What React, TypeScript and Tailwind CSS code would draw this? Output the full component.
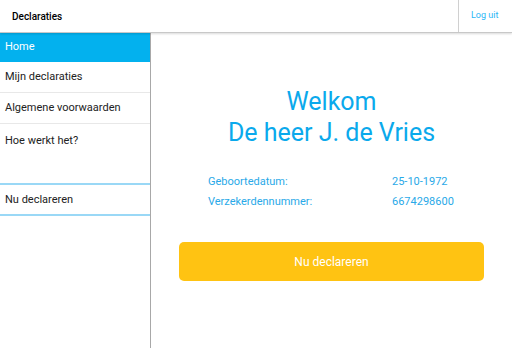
const menu = [
    {label: "Home", active: true},
    {label: "Mijn declaraties"},
    {label: "Algemene voorwaarden"},
];

export default function App() {
    return (
        <div className="w-[512px] h-[348px] bg-white flex flex-col overflow-hidden" style={{fontFamily: "Roboto, 'Noto Sans', sans-serif"}}>
            <header className="h-[33px] shrink-0 flex items-stretch border-b border-[#c8c8c8] shadow-[0_1px_2px_rgba(0,0,0,0.15)] relative z-10">
                <div className="flex-1 flex items-center pl-3 text-[10px] font-medium text-black">Declaraties</div>
                <div className="w-[54px] border-l border-[#d0d0d0] flex items-center pl-3 text-[9px] text-[#29b6f6]">Log uit</div>
            </header>

            <div className="flex flex-1 min-h-0">
                <aside className="w-[151px] shrink-0 border-r border-[#a8a8a8] flex flex-col">
                    {menu.map((item) => (
                        <div
                            key={item.label}
                            className={
                                item.active
                                    ? "h-[29px] bg-[#03b1ee] text-white text-[11px] flex items-center pl-[5px]"
                                    : "h-[31px] border-b border-[#e8e8e8] text-[#222] text-[11px] flex items-center pl-[5px]"
                            }
                        >
                            {item.label}
                        </div>
                    ))}
                    <div className="h-[59px] text-[#222] text-[11px] pl-[5px] pt-[9px]">Hoe werkt het?</div>
                    <div className="h-[33px] border-y-2 border-[#9ad8f6] text-[#222] text-[11px] flex items-center pl-[5px] pt-[2px]">Nu declareren</div>
                </aside>

                <main className="flex-1 flex flex-col px-7 pt-[53px]">
                    <h1 className="text-center text-[25px] leading-[31px] text-[#0aa9ec]">
                        Welkom
                        <br />
                        De heer J. de Vries
                    </h1>

                    <div className="mt-[24px] grid grid-cols-[184px_1fr] pl-[29px] text-[11px] leading-[20px] text-[#29a9e8]">
                        <div>Geboortedatum:</div>
                        <div>25-10-1972</div>
                        <div>Verzekerdennummer:</div>
                        <div>6674298600</div>
                    </div>

                    <button className="mt-[30px] h-[39px] w-full rounded-[5px] bg-[#ffc312] text-white text-[12px]">
                        Nu declareren
                    </button>
                </main>
            </div>
        </div>
    );
}
